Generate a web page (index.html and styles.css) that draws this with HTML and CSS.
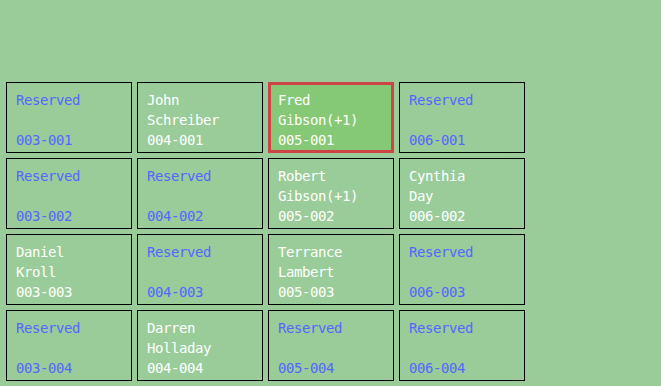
FILE: index.html
```html
<!DOCTYPE html>
<html>
<head>
<meta charset="utf-8">
<link rel="stylesheet" href="styles.css">
</head>
<body>
<div class="grid">
  <div class="card reserved"><div class="name">Reserved</div><div class="id">003-001</div></div>
  <div class="card"><div class="name">John Schreiber</div><div class="id">004-001</div></div>
  <div class="card selected"><div class="name">Fred Gibson(+1)</div><div class="id">005-001</div></div>
  <div class="card reserved"><div class="name">Reserved</div><div class="id">006-001</div></div>

  <div class="card reserved"><div class="name">Reserved</div><div class="id">003-002</div></div>
  <div class="card reserved"><div class="name">Reserved</div><div class="id">004-002</div></div>
  <div class="card"><div class="name">Robert Gibson(+1)</div><div class="id">005-002</div></div>
  <div class="card"><div class="name">Cynthia Day</div><div class="id">006-002</div></div>

  <div class="card"><div class="name">Daniel Kroll</div><div class="id">003-003</div></div>
  <div class="card reserved"><div class="name">Reserved</div><div class="id">004-003</div></div>
  <div class="card"><div class="name">Terrance Lambert</div><div class="id">005-003</div></div>
  <div class="card reserved"><div class="name">Reserved</div><div class="id">006-003</div></div>

  <div class="card reserved"><div class="name">Reserved</div><div class="id">003-004</div></div>
  <div class="card"><div class="name">Darren Holladay</div><div class="id">004-004</div></div>
  <div class="card reserved"><div class="name">Reserved</div><div class="id">005-004</div></div>
  <div class="card reserved"><div class="name">Reserved</div><div class="id">006-004</div></div>
</div>
</body>
</html>
```
FILE: styles.css
```css
html, body {
  margin: 0;
  height: 100%;
  background: #99cc99;
}
body {
  padding: 82px 0 0 6px;
  box-sizing: border-box;
  font-family: "DejaVu Sans Mono", "Liberation Mono", monospace;
  font-size: 14px;
  letter-spacing: -0.43px;
  line-height: 20px;
  color: #ffffff;
}
.grid {
  display: grid;
  grid-template-columns: repeat(4, 126px);
  grid-auto-rows: 71px;
  column-gap: 5px;
  row-gap: 5px;
}
.card {
  box-sizing: border-box;
  border: 1px solid #000000;
  padding: 7px 0 0 9px;
  display: flex;
  flex-direction: column;
}
.card .name {
  width: 84px;
  height: 40px;
  overflow: hidden;
}
.card.reserved {
  color: #5566ff;
}
.card.selected {
  border: 3px solid #cc4444;
  background: #85c875;
  padding: 5px 0 0 7px;
}
```
